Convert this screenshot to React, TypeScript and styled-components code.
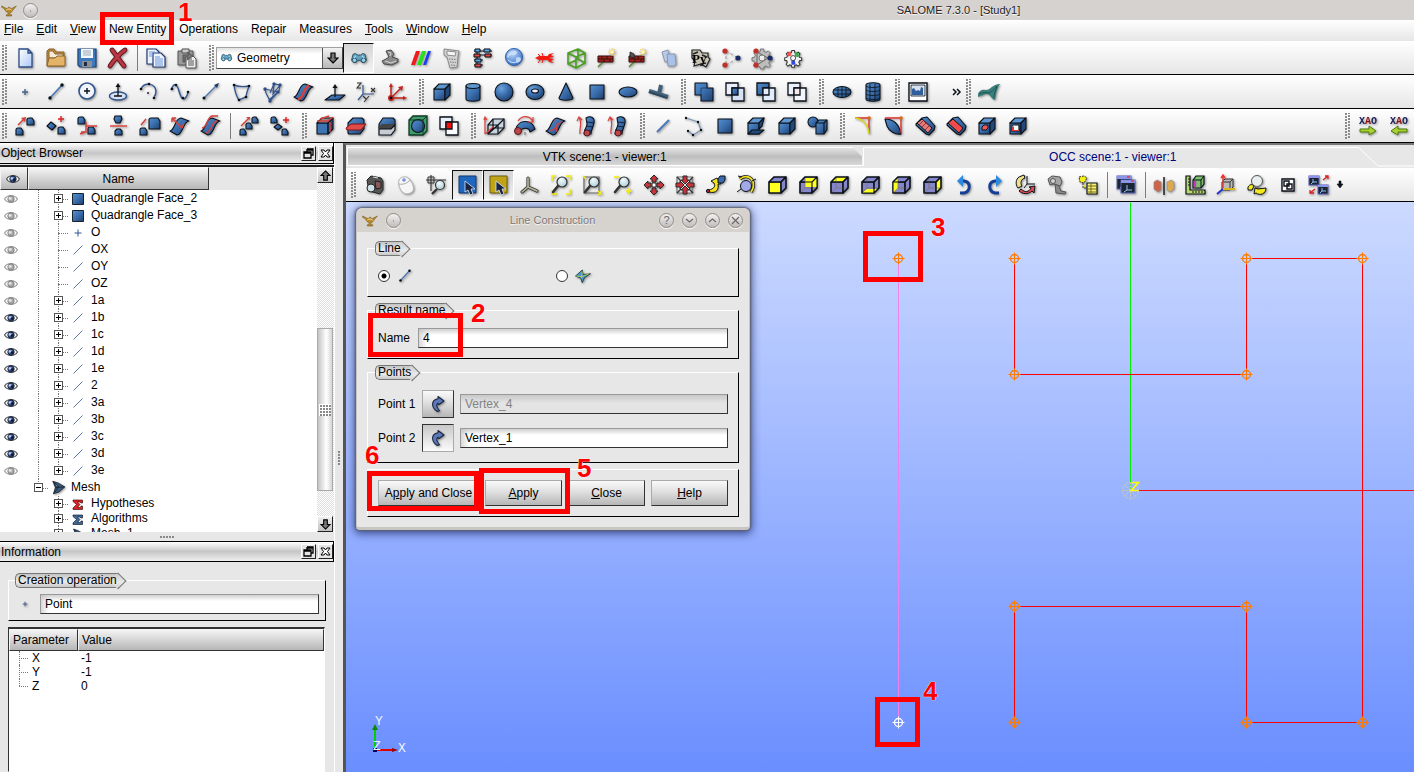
import React from 'react';
import styled, { createGlobalStyle, css } from 'styled-components';

const Global = createGlobalStyle`
  * { box-sizing: border-box; }
  body {
    margin: 0;
    background: #e7e7e7;
    color: #000;
    font: 12px/16px "Liberation Sans", Arial, sans-serif;
    overflow: hidden;
  }
  button, input, select { font: inherit; color: inherit; margin: 0; }
  ul { list-style: none; margin: 0; padding: 0; }
`;

/* ---------- icon drawing helpers ---------- */

const INK = '#0b1118';
const BLUE = 'url(#solid)';
const solid = { fill: BLUE, stroke: INK, strokeWidth: 1.1, strokeLinejoin: 'round' as const };
const wire = (stroke: string, strokeWidth = 1.2) => ({ fill: 'none', stroke, strokeWidth });

const Dots = ({ at, r = 1.3, c = INK }: { at: number[][]; r?: number; c?: string }) => (
  <>{at.map(([x, y]) => <circle key={`${x}-${y}`} cx={x} cy={y} r={r} fill={c} />)}</>
);

const Cube = ({ f = BLUE, t = '#5f97d0', s = '#23497a' }: { f?: string; t?: string; s?: string }) => (
  <g stroke={INK} strokeWidth="1.1" strokeLinejoin="round">
    <path d="M4 9h11v11H4z" fill={f} />
    <path d="M4 9l5-5h11l-5 5z" fill={t} />
    <path d="M15 9l5-5v11l-5 5z" fill={s} />
  </g>
);

const Plus = ({ x, y, c = '#d22' }: { x: number; y: number; c?: string }) => (
  <path d={`M${x - 3} ${y}h6M${x} ${y - 3}v6`} {...wire(c, 1.4)} />
);

const Knob = ({ x, y, s = 7 }: { x: number; y: number; s?: number }) => (
  <path d={`M${x} ${y + s}v-${s - 2}q0-2 2-2h${s - 4}l2 3v${s - 3}z`} {...solid} />
);

const Lens = ({ x = 14, y = 9 }: { x?: number; y?: number }) => (
  <g>
    <path d={`M${x - 4} ${y + 4}L${x - 9} ${y + 10}`} stroke="#333" strokeWidth="2.6" strokeLinecap="round" />
    <circle cx={x} cy={y} r="5" fill="url(#glass)" stroke="#333" strokeWidth="1.2" />
  </g>
);

const Squares = ({ a, b, c }: { a: string; b: string; c: string }) => (
  <g stroke={INK} strokeWidth="1.3">
    <path d="M3 3h12v12H3z" fill={a} />
    <path d="M9 8h12v13H9z" fill={b} />
    <path d="M9 8h6v7H9z" fill={c} />
  </g>
);

const Surface = ({ mid }: { mid?: React.ReactNode }) => (
  <g>
    <path d="M2 17c5-1 5-13 11-13l8 3c-6 0-6 14-12 14z" {...solid} />
    {mid}
  </g>
);

const Binoculars = () => (
  <g stroke="#1d3a4a" strokeWidth="1">
    <path d="M4 7l3-1 3 2h4l3-2 3 1 2 8-3 3h-3l-2-3h-4l-2 3H5l-3-3z" fill="#5fa3c2" />
    <circle cx="6" cy="15" r="3" fill="#8fd0ea" />
    <circle cx="18" cy="15" r="3" fill="#8fd0ea" />
    <path d="M8 9l-3 3M16 9l3 3" stroke="#bfe6f5" strokeWidth="1.4" />
  </g>
);

const ViewCube = ({ face }: { face: string }) => {
  const Y = '#ffff20';
  const L = '#8585cc';
  return (
    <g strokeLinejoin="round" stroke={INK} strokeWidth="1.1">
      <path d="M3 9h12v11H3z" fill={face === 'front' ? Y : L} />
      <path d="M3 9l5-5h12l-5 5z" fill={face === 'top' ? Y : L} />
      <path d="M15 9l5-5v11l-5 5z" fill={face === 'right' ? Y : L} />
      {face === 'back' && <path d="M8 5h12v9H8z" fill={Y} stroke="none" />}
      {face === 'bottom' && <path d="M3 20l5-4h10l-3 4z" fill={Y} stroke="none" />}
      {face === 'left' && <path d="M3 9l5-4v11l-5 4z" fill={Y} stroke="none" />}
      {face !== 'front' && <path d="M8 5v10h11M8 15l-5 5" fill="none" stroke="#77776a" strokeWidth=".8" />}
      <path d="M3 9h12v11H3zM3 9l5-5h12v11l-5 5M15 9l5-5" fill="none" />
    </g>
  );
};

const Window = ({ x, y }: { x: number; y: number }) => (
  <g>
    <rect x={x} y={y} width="14" height="13" fill="#1c2430" stroke="#5660b8" strokeWidth="1" />
    <rect x={x} y={y} width="14" height="3" fill="#8a94e8" />
    <path d={`M${x + 10} ${y + 1}h3`} stroke="#e33" strokeWidth="1.4" />
    <path d={`M${x + 6} ${y + 5}v5h5M${x + 6} ${y + 10}l-3 2`} {...wire('#8fc3ff', 1)} />
  </g>
);

const SmallWindow = ({ x, y }: { x: number; y: number }) => (
  <g>
    <rect x={x} y={y} width="10" height="9" fill="#1c2430" stroke="#5660b8" strokeWidth="1" />
    <rect x={x} y={y} width="10" height="2" fill="#8a94e8" />
    <path d={`M${x + 4} ${y + 3}v3h4M${x + 4} ${y + 6}l-2 2`} {...wire('#8fc3ff', 1)} />
  </g>
);

const Brick = ({ broken = false }: { broken?: boolean }) => (
  <g>
    <path d="M3 21l7-7" stroke="#5a8a3a" strokeWidth="1.6" />
    <path d="M3 10h15v6H3z" fill="#a3231c" stroke="#3a0f0c" strokeWidth="1" />
    <path d="M3 13h15M7 10v3M12 10v3M15 13v3M9 13v3" stroke="#3a0f0c" strokeWidth="1" />
    {broken && <path d="M4 6l4 2 1 4-5-1z" fill="#555" stroke="#222" strokeWidth=".8" />}
    <path d="M17 2v8M13 6h8M14 3l6 6M20 3l-6 6" stroke="#f7d774" strokeWidth="1" />
    <circle cx="17" cy="6" r="1.8" fill="#fff6c0" />
  </g>
);

const gear = 'M10.5 3h3l.5 2.6 2 .8 2.2-1.5 2.1 2.1-1.5 2.2.8 2 2.6.5v3l-2.6.5-.8 2 1.5 2.2-2.1 2.1-2.2-1.5-2 .8-.5 2.2h-3l-.5-2.2-2-.8-2.2 1.5-2.1-2.1 1.5-2.2-.8-2L2 14.7v-3l2.6-.5.8-2L3.9 7 6 4.9l2.2 1.5 2-.8z';

const Red = '#d8403c';

const icons: Record<string, React.ReactNode> = {
  new: <path d="M6 3h9l4 4v14H6zM15 3v4h4" fill="url(#paper)" stroke="#2f4f85" strokeWidth="1.3" />,
  open: (
    <g stroke="#8a6428" strokeWidth="1">
      <path d="M3 20V5l2-2h5l2 3h8v14z" fill="#c08a45" />
      <path d="M5 5h4l2 3h8v4H5z" fill="#f4ecd8" />
      <path d="M3 20l2-8h6l2-2h8v10z" fill="#e3b468" />
    </g>
  ),
  save: (
    <g>
      <path d="M3 3h18v18H5l-2-2z" fill="#3f79bd" stroke="#1e4274" strokeWidth="1.2" />
      <path d="M6 3h12v9H6z" fill="#f4f8fc" />
      <path d="M8 5h8M8 7h8M8 9h8" stroke="#9ab" strokeWidth="1" />
      <path d="M7 15h10v6H7z" fill="#8a9298" />
      <path d="M9 16h3v4H9z" fill="#1c2b44" />
    </g>
  ),
  delete: (
    <g strokeLinecap="round" fill="none">
      <path d="M6 4l12 16M19 4C12 9 8 14 4 20" stroke="#5c1218" strokeWidth="4.8" />
      <path d="M6 4l12 16M19 4C12 9 8 14 4 20" stroke="#b93644" strokeWidth="3" />
    </g>
  ),
  copy: (
    <g fill="#eef4ff" stroke="#1f3a70" strokeWidth="1.2">
      <path d="M3 3h9l3 3v12H3z" />
      <path d="M9 7h8l4 4v10H9z" />
      <path d="M5 6h6M5 8h4M5 10h4M11 11h5M11 13h8M11 15h8M11 17h8M11 19h8" stroke="#6f94d8" strokeWidth="1" />
    </g>
  ),
  paste: (
    <g stroke="#555" strokeWidth="1">
      <path d="M3 5h15v14H3z" fill="#9a9a9a" />
      <path d="M7 3h7v4H7z" fill="#ccc" />
      <path d="M11 10h7l3 3v9H11z" fill="#efefef" />
      <path d="M13 13h4M13 15h6M13 17h6M13 19h6" />
      <path d="M8 16V9h6l-2-3 6 4-6 4 1-3h-3v5z" fill="#777" />
    </g>
  ),
  binoculars: <Binoculars />,
  shaper: (
    <g fill="#8a8a8a" stroke="#4a4a4a" strokeWidth="1">
      <path d="M8 5l5-1 3 4-2 3 6 2v3l-6 3-8-1-2-3 4-2 3-2z" />
      <path d="M10 6l3 1-1 3M7 15l6 2 5-2" stroke="#d4d4d4" fill="none" />
    </g>
  ),
  stripes: (
    <g>
      <path d="M2 19L7 5h4L6 19z" fill="#f01c1c" />
      <path d="M8 19l5-14h4l-5 14z" fill="#27e01c" />
      <path d="M14 19l5-14h3l-5 14z" fill="#1c3cf0" />
    </g>
  ),
  calc: (
    <g stroke="#8a8a8a" strokeWidth="1">
      <path d="M4 3l15 2-1 5-1 11-7 1-3-11-3-2z" fill="#d2d2d2" />
      <path d="M7 5l9 1-1 4-8-1z" fill="#f8f8f8" />
      <path d="M9 13l7 .5M10 16l6 .5M11 19l5 .5" stroke="#777" strokeDasharray="1.500 1" />
    </g>
  ),
  yacs: (
    <g stroke={INK} strokeWidth="1">
      <path d="M3 5h18M3 9h18M3 14h9M3 19h9M6 5v14" />
      <path d="M4 3h5v3H4zM13 3h6v3h-6z" fill="#58a6e8" />
      <path d="M3 8h6v3H3zM14 8h6v3h-6z" fill="#e04848" />
      <path d="M4 13h6v3H4z" fill="#58a6e8" />
      <path d="M4 18h6v3H4z" fill="#e04848" />
    </g>
  ),
  globe: (
    <g>
      <circle cx="12" cy="11" r="8.5" fill="url(#globe)" stroke="#2a5fae" strokeWidth="1" />
      <path d="M6 8c3-4 8-4 9-2s-3 4-5 3-3 4-5 2M14 12c2-2 5-1 5 1s-3 5-5 3z" fill="#cfe2fb" opacity=".8" />
      <path d="M6 14c4 4 9 3 12-1" {...wire('#dbe9fc', 1)} />
    </g>
  ),
  lobster: (
    <g fill="#f31a12">
      <path d="M2 12l4-2h8l3 2-3 2H6z" />
      <path d="M14 11l2-3 5-1-3 2 3 2-6 1zM14 13l2 3 5 1-3-2 3-2-6-1z" />
      <path d="M7 14l-2 3M10 14l-1 3M7 10L5 8M10 10L9 7" stroke="#f31a12" strokeWidth="1" />
    </g>
  ),
  greencube: (
    <g {...wire('#4ba024', 1.6)} strokeLinejoin="round">
      <path d="M4 7l10-4 7 4v10l-9 5-8-4zM4 7l8 4 9-4M12 11v11M14 3v10M14 13l-10 5M14 13l7 4" />
    </g>
  ),
  brick1: <Brick />,
  brick2: <Brick broken />,
  pages: (
    <g fill="#bccbe4" stroke="#8a97b4" strokeWidth="1">
      <path d="M5 6l6-2 2 10-5 2z" />
      <path d="M10 8h8l1 10-2 2h-6z" fill="#a9c0e8" />
    </g>
  ),
  python: (
    <g>
      <path d="M4 4h8l2 3h6v4l2 2-4 8-5-3-7 2 1-5-3-3z" fill="#c9c4b4" stroke="#222" strokeWidth="1.2" />
      <path d="M5 8l5-2M14 9l5 2M13 18l5-1" stroke="#222" strokeWidth="1.6" />
      <text x="4" y="17" fontFamily="Liberation Serif" fontWeight="700" fontSize="13">Py</text>
    </g>
  ),
  graph: (
    <g>
      <path d="M7 5l12 7M7 5l0 14M7 19l12-7" {...wire('#9a9a9a', 1)} strokeDasharray="3 2" />
      <Dots at={[[6, 5], [6, 19]]} r={2.6} c="#c03028" />
      <Dots at={[[19, 12]]} r={2.6} c="#1c2a66" />
    </g>
  ),
  gearGraph: (
    <g>
      <path d={gear} fill="#bdbdbd" stroke="#777" strokeWidth="1" />
      <path d="M7 6l11 6-11 7z" {...wire('#666', 1)} />
      <circle cx="12" cy="12" r="3" fill="#eee" stroke="#777" />
      <Dots at={[[6, 5], [6, 19]]} r={2.6} c="#c03028" />
      <Dots at={[[20, 12]]} r={2.6} c="#1c2a66" />
    </g>
  ),
  gearRgb: (
    <g transform="translate(2 2) scale(.84)">
      <path d={gear} fill="#f2f2f2" stroke="#333" strokeWidth="1.2" />
      <path d="M5 6l4-2 1 5-4 1z" fill="#f05050" />
      <path d="M14 5l5 1-1 5-4-1z" fill="#38b048" />
      <path d="M10 14h4l1 6h-5z" fill="#3848e8" />
      <circle cx="12" cy="12" r="3" fill="#fff" stroke="#333" />
    </g>
  ),

  point: <Plus x={12} y={12} c="#4a628c" />,
  segment: (
    <g>
      <path d="M6 18L18 5" {...wire('#4f78b4', 1.8)} />
      <Dots at={[[6, 18], [18, 5]]} r={1.7} />
    </g>
  ),
  circle: (
    <g>
      <circle cx="12" cy="11" r="8" fill="#f1f4fa" stroke="#33568f" strokeWidth="1.6" />
      <Plus x={12} y={11} c={INK} />
    </g>
  ),
  ellipse: (
    <g>
      <ellipse cx="12" cy="16" rx="8.5" ry="4" fill="#d7e2f2" stroke="#33568f" strokeWidth="1.5" />
      <path d="M12 16V5M8 16h8" {...wire(INK, 1.3)} />
      <path d="M12 3l2.500 4h-5z" fill={INK} />
    </g>
  ),
  arc: (
    <g>
      <path d="M4 9c3-7 14-6 15 2 0 3-1 5-2 6" {...wire('#33568f', 1.5)} />
      <Dots at={[[4, 9], [12, 4], [17, 18]]} />
      <Dots at={[[11, 13]]} r={0.9} />
    </g>
  ),
  curve: (
    <g>
      <path d="M3 10C6 2 9 4 11 11s5 13 9 2" {...wire('#33568f', 1.5)} />
      <Dots at={[[4, 9], [8, 5], [15, 18], [20, 12]]} />
    </g>
  ),
  vector: (
    <g>
      <path d="M5 18L19 4" {...wire('#4f78b4', 1.5)} />
      <path d="M20 3l-5 2 3 3z" fill="#203a66" />
      <Dots at={[[5, 18]]} r={1.5} />
    </g>
  ),
  sketch: (
    <g>
      <path d="M4 5c5 2 10 2 15 1-2 6-3 9-3 11l-7 3C6 16 5 12 4 5z" {...wire('#33568f', 1.4)} />
      <Dots at={[[4, 5], [19, 6], [16, 17], [9, 20]]} />
    </g>
  ),
  sketch3d: (
    <g {...wire('#33568f', 1.2)}>
      <path d="M4 9l13 3-8 9-4-8zM8 20l10-9 1-6-6-1-4 9M13 4l-1 10 7-9" />
      <Dots at={[[4, 9], [17, 12], [9, 21], [13, 4], [19, 5]]} r={1.1} />
    </g>
  ),
  isoline: <Surface mid={<path d="M6 19c6 0 5-12 11-13" {...wire(Red, 2.4)} />} />,
  plane: (
    <g>
      <path d="M2 20l7-5h13l-6 5z" {...solid} />
      <path d="M12 17V6" {...wire(INK, 1.3)} />
      <path d="M12 4l2.500 4h-5z" fill={INK} />
    </g>
  ),
  lcs: (
    <g>
      <path d="M9 5v9h11M9 14l-5 6" {...wire('#33568f', 1.2)} />
      <path d="M3 3h4l-4 5h4M17 8l4 4M21 8l-4 4M9 16l3 3M15 16l-5 6" {...wire('#333', 1.1)} />
    </g>
  ),
  originAxes: (
    <g {...wire('#c8201c', 1.5)}>
      <path d="M6 18V5M6 18h13M6 18L16 8" />
      <path d="M6 3l2 4H4zM22 18l-4-2v4zM18 6l-5 1 4 4z" fill="#c8201c" stroke="none" />
      <Dots at={[[6, 18]]} r={2.2} />
    </g>
  ),

  box: <Cube />,
  cylinder: (
    <g {...solid}>
      <path d="M5 6v13c0 3 14 3 14 0V6z" />
      <ellipse cx="12" cy="6" rx="7" ry="2.5" fill="#5f97d0" />
    </g>
  ),
  sphere: <circle cx="12" cy="12" r="9" {...solid} fill="url(#ball)" />,
  torus: (
    <g {...solid}>
      <ellipse cx="12" cy="12" rx="9" ry="7.5" fill="url(#ball)" />
      <ellipse cx="12" cy="11" rx="3.500" ry="2" fill="#eef" />
    </g>
  ),
  cone: <path d="M12 3l7 15c0 3-14 3-14 0z" {...solid} />,
  face: <path d="M5 5h14v14H5z" {...solid} />,
  disk: <ellipse cx="12" cy="12" rx="9" ry="5" {...solid} />,
  pipeT: (
    <g {...wire('#3f6078', 4)}>
      <path d="M2 11l19 6M12 14l2-9" />
      <path d="M2 12l18 6" stroke="#2a4358" strokeWidth="1.5" />
    </g>
  ),
  fuse: (
    <g>
      <path d="M3 3h12v5h6v13H9v-6H3z" {...solid} />
      <path d="M9 15V8h6" {...wire('#203a60', 0.8)} />
    </g>
  ),
  common: <Squares a="#e9f0fb" b="#d5e2f5" c={BLUE} />,
  cut: <Squares a={BLUE} b="#e3ecfa" c="#e3ecfa" />,
  section: <Squares a="#eaf1fd" b="#f2f5fb" c="#f5e8ea" />,
  meshDisk: (
    <g>
      <ellipse cx="12" cy="12" rx="9" ry="5.5" {...solid} />
      <path d="M3 10h18M3 14h18M8 7v10M12 6.500v11M16 7v10" {...wire(INK, 0.8)} />
    </g>
  ),
  meshCyl: (
    <g>
      <path d="M5 5v14c0 3 14 3 14 0V5c0-3-14-3-14 0z" {...solid} />
      <path d="M5 6c2 2 12 2 14 0M5 10c2 2 12 2 14 0M5 14c2 2 12 2 14 0M5 18c2 2 12 2 14 0M9 4v17M14 4v17" {...wire(INK, 0.8)} />
    </g>
  ),
  image: (
    <g>
      <path d="M3 3h18v18H3z" fill="#fff" stroke={INK} strokeWidth="1.4" />
      <path d="M5 5h14v11H5z" fill="#d6e2f2" stroke={INK} strokeWidth=".8" />
      <path d="M6 15V9l2-1 2 3 2-1 2 1 1-4 2 1v7z" fill="#2f5f9c" />
    </g>
  ),
  more: <path d="M19 9l3 3-3 3M23 9l3 3-3 3" {...wire(INK, 1.5)} />,
  teal: (
    <g>
      <path d="M1 14c1-3 4-5 7-4 5 1 7-6 15-6-3 4-4 10-5 16-3 0-4-5-8-6-3 0-5 2-9 3z" fill="#3b7f7b" />
      <path d="M2 14c4-2 6-1 9-1s6-4 9-7M17 18c0-4 1-7 3-11" {...wire('#1f5552', 1)} />
    </g>
  ),

  translate: (
    <g>
      <Knob x={3} y={14} />
      <Knob x={14} y={4} />
      <path d="M5 11l6-6" {...wire(Red, 1.4)} />
      <path d="M13 3L8 4l4 4z" fill={Red} />
    </g>
  ),
  rotate: (
    <g>
      <path d="M3 12l4-4 5 4-4 4z" {...solid} />
      <Knob x={14} y={13} />
      <Plus x={17} y={5} />
    </g>
  ),
  location: (
    <g>
      <Knob x={3} y={3} />
      <Knob x={13} y={13} />
      <path d="M11 8v10H6M11 12h11M5 20l5-2" {...wire(Red, 1.4)} />
    </g>
  ),
  mirror: (
    <g>
      <path d="M9 2h6l1 3-2 4h-4L8 5z" {...solid} />
      <path d="M9 21v-4l2-2h3l2 2v4z" {...solid} />
      <path d="M4 12h17" {...wire(Red, 1.4)} />
    </g>
  ),
  scale: (
    <g>
      <Knob x={3} y={14} />
      <Knob x={12} y={4} s={11} />
      <path d="M4 11l5-6" {...wire(Red, 1.4)} />
    </g>
  ),
  offset: <Surface mid={<path d="M4 4l10 10M4 4h4M4 4v4M14 14l2-5" {...wire(Red, 1.5)} />} />,
  projection: <Surface mid={<path d="M3 14c5 0 5-11 10-12h6M7 19c6-1 5-11 11-12" {...wire(Red, 1.4)} />} />,
  multiTranslate: (
    <g>
      <Knob x={3} y={15} s={6} />
      <Knob x={9} y={9} s={6} />
      <Knob x={15} y={3} s={6} />
      <path d="M4 12l8-8" {...wire(Red, 1.4)} />
      <path d="M13 3H9l4 3z" fill={Red} />
    </g>
  ),
  multiRotate: (
    <g>
      <Knob x={3} y={3} s={6} />
      <path d="M6 13l4-3 4 3-4 3z" {...solid} />
      <Knob x={14} y={15} s={6} />
      <Plus x={18} y={6} />
    </g>
  ),
  partition: (
    <g>
      <Cube f="#3f74b2" t="#8a8f96" />
      <path d="M4 7h11l5-4M17 8v10M7 5l9-3" {...wire(Red, 1.4)} />
    </g>
  ),
  archimede: (
    <g>
      <path d="M4 19V9l5-5h9l2 2v9l-4 5H5z" {...solid} />
      <path d="M2 14l5-4h15l-5 6H3z" fill="#e04a48" stroke="#7c1414" strokeWidth="1" />
    </g>
  ),
  groupOn: (
    <g>
      <path d="M4 10l4-6h10l2 2v4l-4 4H4z" {...solid} />
      <path d="M3 13l4-3h14l-4 5H4z" fill="#444" />
      <path d="M4 15h12l4-4v5l-4 5H4z" fill="#c7cbd2" stroke={INK} strokeWidth="1.2" />
    </g>
  ),
  blockExplode: (
    <g>
      <path d="M3 6l4-4h14v15l-4 4H3z" fill="#3f9c6a" stroke="#123a24" strokeWidth="1.3" />
      <circle cx="12" cy="12" r="6.5" {...solid} />
      <path d="M3 6h14v15M17 6l4-4" {...wire('#123a24', 1)} />
    </g>
  ),
  sharedShape: <Squares a="#e9f0fb" b="#fafbfe" c="#f80c0c" />,
  extrusion: (
    <g {...wire(INK, 1.2)}>
      <path d="M6 11l5-6h11v9l-6 6H6z" fill="#c9d3dd" />
      <path d="M6 11h10v9M16 11l6-6M6 20L16 11M11 5v9l-5 6M11 14h11" />
      <path d="M3 20V4M2 6l1-3 2 3M3 20l8-7" stroke={Red} />
    </g>
  ),
  revolution: (
    <g>
      <path d="M3 15c2-10 16-10 19 0l-5 3c-1-5-8-5-10 0z" {...solid} />
      <path d="M5 7c4-6 12-6 15 1M20 3v5h-5" {...wire(Red, 1.2)} />
      <circle cx="5" cy="17" r="3.5" fill="#b8484c" stroke="#5c1518" />
      <path d="M12 18v3" {...wire('#777')} />
    </g>
  ),
  filling: <Surface mid={<path d="M5 17c8-1 8-8 13-10M11 5l2 13" {...wire(Red, 1.2)} />} />,
  pipe: (
    <g>
      <path d="M11 4c5-3 9 0 8 5s-3 7-3 11h-7c0-4 3-7 3-10z" {...solid} />
      <path d="M12 8l7 1M11 12l7 1M9 16l7 1" {...wire(INK, 0.8)} />
      <path d="M4 4c4 5 0 10 1 16M2 7l2-4 3 3" {...wire(Red, 1.2)} />
      <circle cx="12" cy="19" r="3" fill="#b8484c" stroke="#5c1518" />
    </g>
  ),
  edgeLine: <path d="M6 18L18 6" {...wire('#4a78b8', 2)} />,
  wire: (
    <g>
      <path d="M4 4l12 4 3 8-8 5-5-4" {...wire('#7f96b8', 1.3)} />
      <Dots at={[[4, 4], [16, 8], [19, 16], [11, 21], [6, 17]]} r={1.2} />
    </g>
  ),
  shell: (
    <g {...solid}>
      <path d="M4 9h11v11H4z" />
      <path d="M4 9l5-5h11l-5 5z" fill="#5f97d0" />
      <path d="M15 9l5-5-2 8-3 3z" fill="#23497a" />
      <path d="M4 20l4-4h12l-5 4z" fill="#23497a" />
    </g>
  ),
  compound: (
    <g {...solid}>
      <circle cx="7" cy="8" r="5" />
      <path d="M10 9l3-3h8v10l-3 4h-8z" />
      <path d="M10 9h8v11M18 9l3-3" fill="none" />
    </g>
  ),
  fillet1d: (
    <g>
      <path d="M4 4h14v16" {...wire('#e03030', 1.4)} />
      <path d="M4 4c9 1 13 6 14 16" {...wire('#d8d820', 1.6)} />
      <Dots at={[[18, 4]]} r={1.8} c="#d86a10" />
    </g>
  ),
  fillet2d: (
    <g>
      <path d="M3 5c9 0 14 5 16 15-6 1-12-3-14-8z" {...solid} />
      <path d="M3 4h16v15" {...wire('#e03030', 1.4)} />
      <Dots at={[[19, 4]]} r={1.8} c="#d86a10" />
    </g>
  ),
  fillet3d: (
    <g>
      <path d="M3 10l6-6 5-1 8 9-1 4-5 5-3-1-10-9z" {...solid} />
      <path d="M4 9l5-4 10 9-4 5z" fill="#e4797c" stroke={INK} strokeWidth="1" />
      <path d="M6 11l5-5M9 13l5-5M12 16l5-5" {...wire('#8a1f22', 0.8)} />
    </g>
  ),
  chamfer: (
    <g>
      <path d="M3 10l6-6 5-1 8 9-1 4-5 5-3-1-10-9z" {...solid} />
      <path d="M4 9l5-4 10 9-4 5z" fill="#f04a4a" stroke={INK} strokeWidth="1" />
    </g>
  ),
  featureCube: (
    <g>
      <Cube />
      <path d="M7 13l2-2h4v3l-2 2H7z" fill="#f05a5a" stroke={INK} strokeWidth="1" />
    </g>
  ),
  featureHole: (
    <g>
      <Cube />
      <path d="M6 11h7v6H6z" fill="#fff" stroke={INK} strokeWidth="1.2" />
      <path d="M6 17v-3l2-2v4h5v1z" fill="#e33" />
    </g>
  ),
  xaoOut: (
    <g>
      <text x="3" y="10" fontSize="10" fontWeight="700" fontFamily="Liberation Mono" fill="#1c2460">X<tspan fill="#8a1010">A</tspan>O</text>
      <path d="M4 15h9v-3l7 5-7 4v-3H4z" fill="#a9d22c" stroke="#4f7a10" strokeWidth="1" />
    </g>
  ),
  xaoIn: (
    <g>
      <text x="3" y="10" fontSize="10" fontWeight="700" fontFamily="Liberation Mono" fill="#1c2460">X<tspan fill="#8a1010">A</tspan>O</text>
      <path d="M20 15h-9v-3l-7 5 7 4v-3h9z" fill="#a9d22c" stroke="#4f7a10" strokeWidth="1" />
    </g>
  ),

  camera: (
    <g stroke="#222" strokeWidth="1">
      <path d="M4 7l4-4 10 2 2 3v9l-3 4-11-3z" fill="#555" />
      <path d="M12 8l6 1v6l-5 1z" fill="#8a5a5a" />
      <circle cx="8" cy="15" r="4" fill="#cfe3e6" />
      <path d="M10 4l5 1" stroke="#ddd" />
    </g>
  ),
  mouse: (
    <g>
      <path d="M5 7c2-4 8-4 10-1 4 4 6 11 3 13-4 3-9 2-11-2-2-3-3-7-2-10z" fill="#f6f6f6" stroke="#b5b5b5" strokeWidth="1" />
      <path d="M5 11c4 1 9-1 11-4" {...wire('#aaa', 1)} />
      <circle cx="10" cy="7" r="1.8" fill="#7a90e0" />
    </g>
  ),
  trihedronZoom: (
    <g>
      <path d="M6 2v16M1 7h20" {...wire('#333', 1.1)} />
      <path d="M3 4h6v6H3z" {...wire('#333', 1)} />
      <path d="M12 16l-5 5" stroke="#333" strokeWidth="2.4" />
      <circle cx="15" cy="12" r="4.5" fill="url(#glass)" stroke="#333" strokeWidth="1.2" />
    </g>
  ),
  select: (
    <g>
      <path d="M3 3h17v17H3z" fill="#1f66bf" stroke="#12396e" />
      <path d="M9 8v11l3-2 2 5 3-1-2-5h4z" fill="#1b2440" stroke="#dfe8f5" strokeWidth=".8" />
    </g>
  ),
  preselect: (
    <g>
      <path d="M3 3h17v17H3z" fill="#c0a418" stroke="#6e5f12" />
      <path d="M9 8v11l3-2 2 5 3-1-2-5h4z" fill="#1b2440" stroke="#dfe8f5" strokeWidth=".8" />
    </g>
  ),
  triad: (
    <g strokeLinecap="round">
      <path d="M10 14V5M10 14l-6 5M10 14l9 4" stroke="#3a3a34" strokeWidth="3.2" />
      <path d="M10 14V5M10 14l-6 5M10 14l9 4" stroke="#b9b7a0" strokeWidth="1.6" />
    </g>
  ),
  fitAll: (
    <g>
      <path d="M3 8V3h4M17 3h4v4M21 16v5h-4M8 21H3v-4" {...wire('#f5ee14', 1.6)} />
      <Lens x={13} y={9} />
    </g>
  ),
  fitArea: (
    <g>
      <path d="M4 4h15v16H4z" {...wire('#666', 1.2)} />
      <path d="M3 3l3 3M18 18l4 4M22 18l-4 4" {...wire('#f5ee14', 1.5)} />
      <Lens x={14} y={9} />
    </g>
  ),
  zoom: (
    <g>
      <path d="M3 4h5M15 18h6M18 15v6" {...wire('#f5ee14', 1.6)} />
      <Lens x={13} y={9} />
    </g>
  ),
  pan: (
    <g fill="#c8343a" stroke="#2a2a2a" strokeWidth="1">
      <path d="M12 2l4 4h-2v3h-4V6H8zM12 22l-4-4h2v-3h4v3h2zM2 12l4-4v2h3v4H6v2zM22 12l-4 4v-2h-3v-4h3V8z" />
      <path d="M10 10h4v4h-4z" fill="#fff" />
    </g>
  ),
  globalPan: (
    <g>
      <path d="M4 4h15v16H4z" fill="#e2e2e2" stroke="#777" strokeWidth="1.2" />
      <path d="M4 4l4 4M20 4l-4 4M4 20l4-4M20 20l-4-4" {...wire('#333', 1.4)} />
      <g fill="#c8343a" stroke="#2a2a2a" strokeWidth="1">
        <path d="M10 3h4v4h2l-4 4-4-4h2zM10 21h4v-4h2l-4-4-4 4h2zM3 10v4h4v2l4-4-4-4v2zM21 10v4h-4v2l-4-4 4-4v2z" />
      </g>
    </g>
  ),
  rotationPoint: (
    <g stroke={INK} strokeWidth="1">
      <path d="M5 19c8 2 10-3 9-8l3 0-4-6-6 3 3 2c2 4-1 6-5 7z" fill="#f5e31c" />
      <path d="M14 6l2-3h5v4l-2 3h-5z" fill="#3a6ab0" />
      <circle cx="4" cy="18" r="1.6" fill="#c22" />
    </g>
  ),
  rotateView: (
    <g>
      <path d="M5 6c4-4 11-3 13 3 1 3 0 7-2 10" {...wire(INK, 3.2)} />
      <path d="M5 6c4-4 11-3 13 3 1 3 0 7-2 10" {...wire('#f0e020', 1.8)} />
      <circle cx="11" cy="13" r="5.5" fill="#a3a9e6" stroke={INK} />
      <path d="M2 19l4-3M17 8l4-2M3 3l4 1" {...wire(INK, 1)} />
    </g>
  ),
  front: <ViewCube face="front" />,
  back: <ViewCube face="back" />,
  top: <ViewCube face="top" />,
  bottom: <ViewCube face="bottom" />,
  left: <ViewCube face="left" />,
  right: <ViewCube face="right" />,
  anticlock: (
    <g>
      <path d="M9 8h3c7 1 7 10 0 12H8" {...wire('#153f94', 3)} />
      <path d="M5 8l6-6v12z" fill="#2b8be0" />
    </g>
  ),
  clock: (
    <g>
      <path d="M15 8h-3c-7 1-7 10 0 12h4" {...wire('#153f94', 3)} />
      <path d="M19 8l-6-6v12z" fill="#2b8be0" />
    </g>
  ),
  resetView: (
    <g stroke={INK} strokeWidth="1">
      <path d="M5 4l5-2 1 3c-4 1-5 5-3 8l-4 2C1 11 2 6 5 4z" fill="#f1e08a" />
      <path d="M7 16c4 4 8 3 10-1l-2-1 6-1-1 7-2-2c-4 4-10 3-13 0z" fill="#e0484c" />
      <path d="M13 3v8h8M13 11l-3 4" fill="none" />
    </g>
  ),
  storeView: (
    <g stroke="#555" strokeWidth="1">
      <path d="M3 6l4-3 8 1 2 5-2 4-6-2-4 1z" fill="#a4a4a4" />
      <path d="M10 11l4 2 2 5 5 1-1 2-9-1z" fill="#888" />
      <circle cx="8" cy="8" r="2.5" fill="#d4d4d4" />
    </g>
  ),
  restoreView: (
    <g>
      <path d="M11 10h10v11H11z" fill="#f8f27a" stroke={INK} strokeWidth="1.2" />
      <path d="M11 13h10M11 16h10M11 19h10M15 10v11" {...wire('#6e6a1a', 1)} />
      <path d="M3 4l5-1 3 2-3 5-4-1zM7 10v5h3" fill="#f5ee14" stroke="#333" strokeWidth="1" strokeDasharray="2 1" />
    </g>
  ),
  cloneWindow: (
    <g>
      <Window x={3} y={3} />
      <Window x={7} y={7} />
    </g>
  ),
  clipping: (
    <g>
      <path d="M12 4v18" {...wire(INK, 1.4)} />
      <path d="M9 9v8l-3 2-4-3V9l3-2z" fill="#d0644a" stroke="#888" strokeWidth=".6" />
      <path d="M15 9v8l3 2 4-3V9l-3-2z" fill="#dca850" stroke="#888" strokeWidth=".6" />
    </g>
  ),
  graduated: (
    <g>
      <path d="M3 3h4v14h15v4H3z" fill="#b9d86a" stroke={INK} strokeWidth="1.2" />
      <path d="M5 6h2M5 9h2M5 12h2M10 18v2M13 18v2M16 18v2M19 18v2" {...wire(INK, 1)} />
      <path d="M10 7l3-4h8v8l-3 4h-8z" fill="#7fc06a" stroke={INK} strokeWidth="1.2" />
      <path d="M10 7h8v8M18 7l3-4" {...wire(INK, 1)} />
      <path d="M12 8v6" stroke="#c03ac0" strokeWidth="2.4" />
    </g>
  ),
  ambient: (
    <g>
      <path d="M8 9l3-3h8v8l-3 3H8z" fill="#bbb" stroke="#333" strokeWidth="1" />
      <path d="M8 9h8v8M16 9l3-3" {...wire('#333', 1)} />
      <path d="M9 17V3M7 5l2-3 2 3" {...wire('#e33', 1.4)} />
      <path d="M9 16l-6 5" {...wire('#2436c8', 2)} />
      <path d="M9 16h12" {...wire('#d8b81c', 2)} />
    </g>
  ),
  light: (
    <g>
      <circle cx="12" cy="8" r="5.5" fill="#e8eef0" stroke="#555" strokeWidth="1" />
      <path d="M10 13h4v4h-4z" fill="#777" />
      <path d="M3 14c2-3 4-3 6-1l-2 4-4 0zM13 16l8-1c0 6-6 8-10 5l-2 1 1-6z" fill="#f5e81c" stroke={INK} strokeWidth="1" />
    </g>
  ),
  minimize: (
    <g>
      <path d="M6 6h12v12H6z" fill="#fff" stroke={INK} strokeWidth="1.4" />
      <path d="M8 8h5v5H8zM11 11h5v5h-5z" fill="#fff" stroke={INK} strokeWidth="1.4" />
    </g>
  ),
  syncViews: (
    <g>
      <SmallWindow x={2} y={3} />
      <SmallWindow x={11} y={12} />
      <path d="M3 20l5-4M3 17v3h4M21 3l-5 4M18 3h3v3" {...wire('#e02020', 1.3)} />
    </g>
  ),
  down: <path d="M11 8h2v3h2l-3 4-3-4h2z" fill={INK} stroke={INK} strokeWidth=".6" />,

  eye: (
    <g>
      <path d="M1 12c5-8 17-8 22 0-5 8-17 8-22 0z" fill="#fff" stroke="#4c4c4c" strokeWidth="2" />
      <circle cx="12" cy="12" r="5.5" fill="#2f4f96" stroke="#10192c" strokeWidth="1.5" />
      <path d="M8 9h5v4H8z" fill="#c4d2ee" />
      <circle cx="14" cy="13" r="2.5" fill="#10192c" />
    </g>
  ),
  eyeOff: (
    <g>
      <path d="M1 12c5-8 17-8 22 0-5 8-17 8-22 0z" fill="#fff" stroke="#999" strokeWidth="2" />
      <circle cx="12" cy="12" r="5.5" fill="#a8a8a8" stroke="#7c7c7c" strokeWidth="1.5" />
      <path d="M8 9h5v4H8z" fill="#e8e8e8" />
    </g>
  ),
  treeFace: <path d="M1 1h22v22H1z" fill={BLUE} stroke={INK} strokeWidth="1.8" />,
  treePoint: <path d="M5 12h14M12 5v14" {...wire('#33568f', 2)} />,
  treeLine: <path d="M3 21L21 3" {...wire('#4a6a94', 1.8)} />,
  mesh: (
    <g stroke="#141c28" strokeWidth="1.2">
      <path d="M3 2l9 3 10 6-9 8-9 3 3-10z" fill="#3c5878" />
      <path d="M7 12l15-1M3 2l9 9-8 11" fill="none" />
      <path d="M6 5l5 5-3 1z" fill="#9cc4ec" />
    </g>
  ),
  sigmaRed: <path d="M2 4h19v6h-3l-2-2h-5l5 5-5 6h6l1-3h3v7H2v-3l7-7-7-6z" fill="#e02424" stroke="#3a0808" strokeWidth="1.3" />,
  sigmaBlue: <path d="M2 4h19v6h-3l-2-2h-5l5 5-5 6h6l1-3h3v7H2v-3l7-7-7-6z" fill="#3f6a98" stroke="#0c1626" strokeWidth="1.3" />,
  bent: <path d="M12 2l8 6-7 5-1-2c-3 2-2 5 2 10l-3 1C3 17 2 7 12 5z" fill="#5b78b8" stroke="#18233c" strokeWidth="1.4" strokeLinejoin="round" />,
  planes: (
    <g stroke="#0e2a3a" strokeWidth="1">
      <path d="M2 12l9-8 1 6 10-1-8 5-3 7-2-6z" fill="#4596c4" />
      <path d="M3 12l7 1 10-4M11 6l-1 9" stroke="#d8d840" fill="none" />
    </g>
  ),
  lamp: (
    <g fill="#b8892a" stroke="#6e5216" strokeWidth=".8">
      <path d="M1 6l8 4 2-2h2l2 2 8-4-5 6c-2 4-4 4-5 5v2h3v2H8v-2h3v-2c-2-1-3-2-5-5-1-2-3-3-5-4z" />
      <path d="M8 12c3-2 5-2 8 0" stroke="#f8e4a0" strokeWidth="1.4" fill="none" />
    </g>
  ),
};

const Svg = styled.svg<{ $shadow?: boolean }>`
  display: block;
  flex: none;
  overflow: visible;
  ${(p) => p.$shadow && css`filter: drop-shadow(1px 1px 1px rgba(0, 0, 0, 0.4));`}
`;

const Icon = ({ name, size = 24, shadow = false }: { name: string; size?: number; shadow?: boolean }) => (
  <Svg width={size} height={size} viewBox="0 0 24 24" $shadow={shadow} aria-hidden="true">{icons[name]}</Svg>
);

const Defs = styled.svg`
  position: absolute;
  width: 0;
  height: 0;
`;

const Gradients = () => (
  <Defs aria-hidden="true">
    <defs>
      <linearGradient id="solid" x1="0" y1="0" x2="1" y2="1">
        <stop offset="0" stopColor="#5590cf" />
        <stop offset=".5" stopColor="#3a6dab" />
        <stop offset="1" stopColor="#1e3f6e" />
      </linearGradient>
      <linearGradient id="paper" x1="0" y1="0" x2="1" y2="1">
        <stop offset="0" stopColor="#fff" />
        <stop offset="1" stopColor="#a9c6f7" />
      </linearGradient>
      <radialGradient id="ball" cx=".35" cy=".3" r=".8">
        <stop offset="0" stopColor="#6ba3dc" />
        <stop offset=".5" stopColor="#3a6dab" />
        <stop offset="1" stopColor="#1c3a66" />
      </radialGradient>
      <radialGradient id="globe" cx=".4" cy=".3" r=".8">
        <stop offset="0" stopColor="#b8d4f8" />
        <stop offset="1" stopColor="#2c68c4" />
      </radialGradient>
      <radialGradient id="glass" cx=".4" cy=".3" r=".8">
        <stop offset="0" stopColor="#f2fbfd" />
        <stop offset="1" stopColor="#a6c8d2" />
      </radialGradient>
    </defs>
  </Defs>
);

/* ---------- frame ---------- */

const Shell = styled.div`
  display: flex;
  flex-direction: column;
  height: 100vh;
`;

const TitleBar = styled.header`
  display: flex;
  align-items: center;
  gap: 6px;
  flex: none;
  height: 20px;
  padding: 0 1px;
  background: #d6d2d0;
`;

const TitleText = styled.h1`
  flex: 1;
  margin: 0;
  padding-left: 460px;
  text-align: center;
  font-size: 11px;
  line-height: 16px;
  font-weight: 400;
  color: #222;
  text-shadow: 0 1px 1px #fff;
`;

const RoundButton = styled.button`
  display: flex;
  align-items: center;
  justify-content: center;
  width: 15px;
  height: 15px;
  padding: 0;
  border: 1px solid #8e8b89;
  border-radius: 50%;
  background: linear-gradient(#f2f1f0, #bfbcba);
  color: #666;
  font-size: 11px;
  line-height: 12px;
  box-shadow: 0 1px 1px #fff;
`;

const MenuBar = styled.nav`
  display: flex;
  align-items: center;
  gap: 13px;
  flex: none;
  height: 21px;
  padding: 0 4px 3px;
  background: linear-gradient(#fff, #e6e6e6);
`;

const MenuItem = styled.button`
  position: relative;
  padding: 0;
  border: 0;
  background: none;
  line-height: 16px;
  white-space: nowrap;
`;

const CalloutBox = styled.span`
  position: absolute;
  z-index: 5;
  border: 5px solid #f00;
  pointer-events: none;
`;

const CalloutNumber = styled.span`
  position: absolute;
  z-index: 6;
  color: #f00;
  font-size: 26px;
  line-height: 26px;
  font-weight: 700;
  text-shadow: 0 0 1px #fff, 0 0 1px #fff;
  pointer-events: none;
`;

type Rect = { x: number; y: number; w: number; h: number };

const Callout = ({ n, box, at }: { n: number; box: Rect; at: [number, number] }) => (
  <>
    <CalloutBox style={{ left: box.x, top: box.y, width: box.w, height: box.h }} />
    <CalloutNumber style={{ left: at[0], top: at[1] }}>{n}</CalloutNumber>
  </>
);

const Bar = styled.div`
  display: flex;
  align-items: center;
  height: 34px;
  flex: none;
  border-bottom: 1px solid #000;
  background: linear-gradient(#fff, #e6e6e6);
  overflow: hidden;
`;

const gripSizes = { lead: [9, 2], mid: [14, 7], view: [13, 5] };

const Grip = styled.span<{ $kind?: keyof typeof gripSizes; $end?: boolean }>`
  flex: none;
  width: ${(p) => gripSizes[p.$kind ?? 'mid'][0]}px;
  height: 26px;
  margin-left: ${(p) => (p.$end ? 'auto' : 0)};
  padding-left: ${(p) => gripSizes[p.$kind ?? 'mid'][1]}px;
  &::before {
    content: '';
    display: block;
    width: 5px;
    height: 26px;
    background:
      linear-gradient(#8c8c8c 2px, transparent 2px) 0 0 / 2px 3px repeat-y,
      linear-gradient(#8c8c8c 2px, transparent 2px) 3px 2px / 2px 3px repeat-y;
  }
`;

const Rule = styled.span`
  flex: none;
  width: 1px;
  height: 26px;
  margin: 0 2px 0 4px;
  background: #7c7c7c;
`;

const ToolButton = styled.button<{ $pressed?: boolean; $w?: number }>`
  display: flex;
  align-items: center;
  justify-content: center;
  flex: none;
  width: ${(p) => p.$w ?? 31}px;
  height: 30px;
  padding: 0;
  border: 1px solid transparent;
  background: none;
  ${(p) => p.$pressed && css`
    border-color: #111 #fff #fff #111;
    background: linear-gradient(#d4d4d4, #f3f3f3);
  `}
`;

const narrow: Record<string, number> = { down: 12, more: 26 };

const Tools = ({ names, pressed = [] }: { names: string; pressed?: string[] }) => (
  <>
    {names.split(' ').map((n, i) => {
      if (n === '|') return <Rule key={i} />;
      if (n === '::') return <Grip key={i} />;
      return (
        <ToolButton key={i} aria-label={n} $pressed={pressed.includes(n)} $w={narrow[n]}>
          <Icon name={n} shadow={!narrow[n]} />
        </ToolButton>
      );
    })}
  </>
);

const Combo = styled.label`
  display: flex;
  align-items: center;
  flex: none;
  width: 127px;
  height: 22px;
  padding-left: 3px;
  border: 1px solid;
  border-color: #a0a0a0 #444 #444 #a0a0a0;
  background: linear-gradient(#e2e2e2, #fff 6px);
`;

const ComboSelect = styled.select`
  appearance: none;
  flex: 1;
  min-width: 0;
  padding: 0 0 0 4px;
  border: 0;
  background: none;
  line-height: 16px;
`;

const ComboArrow = styled.span`
  display: flex;
  align-items: center;
  justify-content: center;
  width: 20px;
  height: 20px;
  border-left: 1px solid #555;
  background: linear-gradient(#f2f2f2, #b8b8b8);
`;

const Arrow = ({ up = false, size = 12 }: { up?: boolean; size?: number }) => (
  <svg width={size} height={size} viewBox="0 0 12 12" aria-hidden="true">
    <path
      d={up ? 'M6 1l5 5H8v5H4V6H1z' : 'M6 11l5-5H8V1H4v5H1z'}
      fill="#777" stroke="#000" strokeWidth="1.2"
    />
  </svg>
);

const Workspace = styled.main`
  display: flex;
  flex: 1;
  min-height: 0;
`;

const Docks = styled.section`
  display: grid;
  grid-template-rows: minmax(0, 389fr) 9px minmax(0, 231fr);
  flex: none;
  width: 334px;
`;

const Dock = styled.section`
  display: flex;
  flex-direction: column;
  min-height: 0;
  min-width: 0;
`;

const DockTitle = styled.header<{ $line?: boolean }>`
  display: flex;
  align-items: center;
  gap: 2px;
  flex: none;
  height: 21px;
  padding: 0 0 0 1px;
  border: 1px solid #000;
  border-width: ${(p) => (p.$line ? 1 : 0)}px 1px 1px 0;
  background: linear-gradient(#fff, #c6c6c6 50%, #f0f0f0);
`;

const DockName = styled.h2`
  flex: 1;
  margin: 0;
  font-size: 12px;
  line-height: 16px;
  font-weight: 400;
`;

const DockButton = styled.button`
  display: flex;
  align-items: center;
  justify-content: center;
  width: 15px;
  height: 15px;
  padding: 0;
  border: 1px solid;
  border-color: #fff #222 #222 #fff;
  background: #e4e4e4;
`;

const DockHeader = ({ title, line }: { title: string; line?: boolean }) => (
  <DockTitle $line={line}>
    <DockName>{title}</DockName>
    <DockButton aria-label="Float">
      <svg width="11" height="11" viewBox="0 0 11 11">
        <path d="M4 1h6v6H8M4 1v3M4 2h6" {...wire('#000', 1.3)} />
        <path d="M1 4h7v6H1zM1 5h7" {...wire('#000', 1.3)} />
      </svg>
    </DockButton>
    <DockButton aria-label="Close">
      <svg width="11" height="11" viewBox="0 0 11 11">
        <path d="M1 2h3l1.500 2L7 2h3L7.500 5.500 10 9H7L5.500 7 4 9H1l2.500-3.500z" fill="#fff" stroke="#000" strokeWidth="1" />
      </svg>
    </DockButton>
  </DockTitle>
);

const TreeFrame = styled.div`
  display: flex;
  flex: 1;
  min-height: 0;
  margin-top: 1px;
  border-top: 2px solid #222;
  background: #fff;
`;

const TreeMain = styled.div`
  flex: 1;
  min-width: 0;
  overflow: hidden;
`;

const TreeHead = styled.div`
  display: flex;
  height: 23px;
  background: #e7e7e7;
`;

const HeadCell = styled.div<{ $w: number }>`
  display: flex;
  align-items: center;
  justify-content: center;
  width: ${(p) => p.$w}px;
  border: 1px solid;
  border-color: #f4f4f4 #333 #333 #f4f4f4;
  background: linear-gradient(#f4f4f4, #b6b6b6);
`;

const EyeHead = styled(HeadCell)`
  padding-right: 3px;
`;

const TreeRow = styled.li<{ $short?: boolean }>`
  display: flex;
  align-items: center;
  height: ${(p) => (p.$short ? 15 : 17)}px;
`;

const EyeCell = styled.span`
  display: flex;
  justify-content: center;
  width: 28px;
  padding-right: 6px;
`;

const Guide = styled.span<{ $v?: 'full' | 'top' | 'none'; $h?: boolean }>`
  position: relative;
  display: flex;
  align-items: center;
  align-self: stretch;
  width: 20px;
  padding-left: 6px;
  &::before {
    content: '';
    position: absolute;
    left: 10px;
    top: 0;
    height: ${(p) => (p.$v === 'top' ? '50%' : '100%')};
    border-left: ${(p) => (p.$v === 'none' ? 0 : 1)}px dotted #777;
  }
  &::after {
    content: '';
    position: absolute;
    left: 10px;
    right: 0;
    top: 50%;
    border-top: ${(p) => (p.$h ? 1 : 0)}px dotted #777;
  }
`;

const Expander = styled.button`
  position: relative;
  z-index: 1;
  width: 9px;
  height: 9px;
  padding: 0;
  border: 1px solid #555;
  background:
    linear-gradient(#000, #000) center / 5px 1px no-repeat,
    linear-gradient(#000, #000) center / 1px 5px no-repeat,
    #fff;
  &[aria-expanded='true'] {
    background: linear-gradient(#000, #000) center / 5px 1px no-repeat, #fff;
  }
`;

const TreeIcon = styled.span`
  display: flex;
  justify-content: center;
  width: 20px;
`;

const TreeLabel = styled.span`
  padding-left: 3px;
  line-height: 15px;
  white-space: nowrap;
`;

type Item = { name: string; icon: string; eye?: 'eye' | 'eyeOff'; leaf?: boolean; mesh?: boolean };

const geometry: Item[] = [
  { name: 'Quadrangle Face_2', icon: 'treeFace', eye: 'eyeOff' },
  { name: 'Quadrangle Face_3', icon: 'treeFace', eye: 'eyeOff' },
  { name: 'O', icon: 'treePoint', eye: 'eyeOff', leaf: true },
  { name: 'OX', icon: 'treeLine', eye: 'eyeOff', leaf: true },
  { name: 'OY', icon: 'treeLine', eye: 'eyeOff', leaf: true },
  { name: 'OZ', icon: 'treeLine', eye: 'eyeOff', leaf: true },
  { name: '1a', icon: 'treeLine', eye: 'eyeOff' },
  ...['1b', '1c', '1d', '1e', '2', '3a', '3b', '3c', '3d'].map((name): Item => ({ name, icon: 'treeLine', eye: 'eye' })),
  { name: '3e', icon: 'treeLine', eye: 'eyeOff' },
];

const meshes: Item[] = [
  { name: 'Hypotheses', icon: 'sigmaRed', mesh: true },
  { name: 'Algorithms', icon: 'sigmaBlue', mesh: true },
  { name: 'Mesh_1', icon: 'mesh', mesh: true },
];

const Leaf = ({ item, last }: { item: Item; last?: boolean }) => (
  <TreeRow $short={item.mesh}>
    <EyeCell>{item.eye && <Icon name={item.eye} size={14} />}</EyeCell>
    <Guide $v={item.mesh ? 'none' : 'full'} />
    <Guide $v={last ? 'top' : 'full'} $h>
      {!item.leaf && <Expander aria-label={`Expand ${item.name}`} aria-expanded={false} />}
    </Guide>
    <TreeIcon><Icon name={item.icon} size={12} /></TreeIcon>
    <TreeLabel>{item.name}</TreeLabel>
  </TreeRow>
);

const Scroll = styled.div`
  display: flex;
  flex-direction: column;
  flex: none;
  width: 17px;
  background: repeating-conic-gradient(#dedede 0 25%, #fff 0 50%) 0 0 / 2px 2px;
`;

const ScrollButton = styled(DockButton)`
  flex: none;
  width: 16px;
  height: 16px;
  background: linear-gradient(#f0f0f0, #c0c0c0);
`;

const Space = styled.span<{ $grow: number }>`
  flex: ${(p) => p.$grow} 1 0;
`;

const Thumb = styled.span`
  display: flex;
  align-items: center;
  justify-content: center;
  flex: 162 1 0;
  width: 16px;
  border: 1px solid #aaa;
  background: linear-gradient(90deg, #c4c4c4, #fff 60%, #d4d4d4);
  &::before {
    content: '';
    width: 12px;
    height: 12px;
    background: linear-gradient(90deg, #fff 1px, transparent 1px) 0 0 / 3px 3px,
      linear-gradient(#fff 1px, #888 1px) 0 0 / 3px 3px;
  }
`;

const Splitter = styled.div<{ $vertical?: boolean }>`
  display: flex;
  align-items: center;
  justify-content: center;
  &::before {
    content: '';
    width: ${(p) => (p.$vertical ? 2 : 14)}px;
    height: ${(p) => (p.$vertical ? 14 : 2)}px;
    background: ${(p) => (p.$vertical
      ? 'linear-gradient(#888 2px, transparent 2px) 0 0 / 2px 3px'
      : 'linear-gradient(90deg, #888 2px, transparent 2px) 0 0 / 3px 2px')};
  }
  ${(p) => p.$vertical && css`
    flex: none;
    width: 9px;
    border-left: 1px solid #fff;
  `}
`;

/* ---------- group boxes and form parts ---------- */

const Group = styled.fieldset<{ $tight?: boolean }>`
  min-width: 0;
  margin: 0;
  padding: ${(p) => (p.$tight ? '6px' : '10px')};
  border: 1px solid;
  border-color: #fff #000 #000 #fff;
`;

const Legend = styled.legend<{ $flush?: boolean }>`
  position: relative;
  z-index: 0;
  height: 15px;
  margin-left: ${(p) => (p.$flush ? 0 : -3)}px;
  padding: 0 2px;
  border: 1px solid #777;
  border-right: 0;
  border-radius: 5px 0 0 5px;
  background: linear-gradient(#c4c4c4, #ececec 60%, #c8c8c8);
  line-height: 12px;
  &::after {
    content: '';
    position: absolute;
    z-index: -1;
    right: -5px;
    top: 1px;
    width: 11px;
    height: 11px;
    border: 1px solid #777;
    border-width: 1px 1px 0 0;
    background: linear-gradient(135deg, #ccc, #eaeaea 60%, #ccc);
    transform: rotate(45deg);
  }
`;

const TextInput = styled.input`
  flex: 1;
  min-width: 0;
  height: 20px;
  padding: 0 4px;
  border: 1px solid;
  border-color: #999 #333 #333 #999;
  border-radius: 0;
  outline: 0;
  background: linear-gradient(90deg, rgba(190, 190, 190, 0.6), transparent 8px), linear-gradient(#d0d0d0, #fff 6px);
  &:disabled {
    background: linear-gradient(#c8c8c8, #e4e4e4 8px);
    color: #828282;
  }
`;

const Info = styled.div`
  display: flex;
  flex-direction: column;
  flex: 1;
  gap: 6px;
  min-height: 0;
  padding: 11px 8px 0;
`;

const Line = styled.div`
  display: flex;
  align-items: center;
  gap: 6px;
`;

const IconSlot = styled.span`
  display: flex;
  justify-content: center;
  width: 19px;
`;

const TableFrame = styled.div`
  flex: 1;
  min-height: 0;
  margin-right: 1px;
  border: 1px solid;
  border-top-width: 2px;
  border-color: #333 #fff #fff #333;
  background: #fff;
`;

const Table = styled.table`
  width: 100%;
  border-collapse: separate;
  border-spacing: 0;
  table-layout: fixed;
  th {
    height: 22px;
    padding: 0 3px;
    border: 1px solid;
    border-color: #f4f4f4 #333 #333 #f4f4f4;
    background: linear-gradient(#f4f4f4, #b6b6b6);
    font-weight: 400;
    text-align: left;
  }
  th:first-child { width: 69px; }
  td {
    height: 14px;
    padding: 0 3px;
    line-height: 14px;
  }
`;

const NameCell = styled.span`
  display: flex;
  align-items: center;
  height: 14px;
`;

const Branch = styled(Guide)`
  padding: 0;
  width: 20px;
  &::before { left: 7px; }
  &::after { left: 7px; right: 4px; }
`;

/* ---------- viewer ---------- */

const Viewer = styled.section`
  display: flex;
  flex-direction: column;
  flex: 1;
  min-width: 0;
  border-top: 2px solid #777;
  border-left: 3px solid #555;
`;

const Tabs = styled.div`
  display: grid;
  grid-template-columns: 1fr 1fr;
  flex: none;
  height: 23px;
  padding: 2px 36px 2px 1px;
`;

const Tab = styled.button<{ $active?: boolean }>`
  position: relative;
  padding: 0;
  border: 1px solid #fff;
  line-height: 16px;
  ${(p) => (p.$active
    ? css`
      border-width: 1px 0 0 1px;
      background: #e7e7e7;
      color: #00007c;
      padding-right: 16px;
    `
    : css`
      background: linear-gradient(#e2e2e2, #bebebe 50%, #d8d8d8);
      clip-path: polygon(0 0, calc(100% - 10px) 0, 100% 10px, 100% 100%, 0 100%);
    `)}
`;

const TabEdge = styled.svg`
  position: absolute;
  right: -36px;
  top: -1px;
  background: #e7e7e7;
`;

const Scene = styled.div`
  position: relative;
  flex: 1;
  min-height: 0;
  overflow: hidden;
  background: linear-gradient(#ccdaff, #6a8eff);
`;

const Drawing = styled.svg`
  position: absolute;
  inset: 0;
  width: 100%;
  height: 100%;
`;

const Triad = styled.svg`
  position: absolute;
  left: 20px;
  bottom: 12px;
`;

const vertices = [
  [552, 56], [668, 56], [900, 56], [1016, 56],
  [668, 172], [900, 172], [668, 404], [900, 404],
  [668, 520], [900, 520], [1016, 520],
];

const Vertex = ({ x, y, c = '#ff7a00' }: { x: number; y: number; c?: string }) => (
  <g {...wire(c, 1)}>
    <circle cx={x} cy={y} r="4" strokeWidth="1.3" />
    <path d={`M${x - 6} ${y}h12M${x} ${y - 6}v12`} />
  </g>
);

const SceneDrawing = () => (
  <Drawing aria-hidden="true">
    <g transform="translate(0.5 0.5)">
      <path d="M784 0v288" {...wire('#00f000', 1)} />
      <line x1="784" y1="288" x2="100%" y2="288" stroke="#f0101c" />
      <path d="M552 56v464" {...wire('#ee82ee', 1)} />
      <path d="M668 56v116h232V56h116v464H900V404H668v116" {...wire('#f00', 1)} />
      {vertices.map(([x, y]) => <Vertex key={`${x}-${y}`} x={x} y={y} />)}
      <Vertex x={552} y={520} c="#fff" />
      <g {...wire('#c9ccb0', 1)}>
        <circle cx="784" cy="288" r="8" strokeDasharray="2 1" />
        <path d="M776 288h16M784 280v16M778 282l12 12M790 282l-12 12" strokeDasharray="2 1" />
      </g>
      <path d="M785 280h7l-7 8h7" {...wire('#ff0', 1.6)} />
    </g>
  </Drawing>
);

const DialogFrame = styled.section`
  position: absolute;
  left: 10px;
  top: 6px;
  width: 394px;
  border: 1px solid #c9c5c1;
  border-width: 0 1px 3px;
  border-radius: 6px 6px 4px 4px;
  background: #e7e7e7;
  box-shadow: 0 0 2px 1px #5a5f70, 0 2px 8px 2px rgba(20, 30, 90, 0.65);
`;

const DialogTitle = styled.header`
  display: flex;
  align-items: center;
  gap: 8px;
  height: 24px;
  padding: 0 6px 0 5px;
  border-radius: 6px 6px 0 0;
  background: #d6d2ce;
  color: #7a7876;
`;

const DialogName = styled.h2`
  flex: 1;
  margin: 0;
  padding-left: 45px;
  text-align: center;
  font-size: 11px;
  line-height: 16px;
  font-weight: 400;
  text-shadow: 0 1px 1px #fff;
`;

const DialogBody = styled.form`
  display: flex;
  flex-direction: column;
  gap: 6px;
  padding: 9px 10px 10px;
`;

const Choices = styled.div`
  display: grid;
  grid-template-columns: 1fr 1fr;
  gap: 6px;
`;

const Choice = styled.label`
  display: flex;
  align-items: center;
  gap: 6px;
  height: 20px;
`;

const Radio = styled.input`
  appearance: none;
  width: 12px;
  height: 12px;
  margin: 0;
  border: 1px solid #333;
  border-radius: 50%;
  background: #fff;
  &:checked { background: radial-gradient(circle, #000 2px, #fff 3px); }
`;

const PointRow = styled.div`
  display: grid;
  grid-template-columns: 38px 32px 1fr;
  align-items: center;
  gap: 6px;
  & + & { margin-top: 6px; }
`;

const FieldLabel = styled.label`
  white-space: nowrap;
`;

const NameRow = styled(Line)`
  ${FieldLabel} { width: 34px; }
`;

const Button = styled.button<{ $down?: boolean }>`
  display: flex;
  align-items: center;
  justify-content: center;
  height: 26px;
  padding: 0;
  border: 1px solid;
  border-color: #aaa #333 #333 #aaa;
  background: linear-gradient(#fafafa, #dcdcdc 50%, #b6b6b6);
  white-space: nowrap;
`;

const PickButton = styled(Button)`
  height: 28px;
  ${(p) => p.$down && css`
    border-color: #333 #aaa #aaa #333;
    background: linear-gradient(#c8c8c8, #fbfbfb);
  `}
`;

const Actions = styled.div`
  display: grid;
  grid-template-columns: 101px 1fr 1fr 1fr;
  gap: 6px;
`;

const Glyph = ({ d }: { d: string }) => (
  <svg width="9" height="9" viewBox="0 0 9 9" aria-hidden="true"><path d={d} {...wire('#6c6a68', 1.2)} /></svg>
);

const Dialog = () => (
  <DialogFrame aria-label="Line Construction">
    <DialogTitle>
      <Icon name="lamp" size={16} />
      <RoundButton aria-label="Window menu"><Glyph d="M4 5h1" /></RoundButton>
      <DialogName>Line Construction</DialogName>
      <RoundButton aria-label="Help">?</RoundButton>
      <RoundButton aria-label="Minimize"><Glyph d="M1 3l3.500 3L8 3" /></RoundButton>
      <RoundButton aria-label="Maximize"><Glyph d="M1 6l3.500-3L8 6" /></RoundButton>
      <RoundButton aria-label="Close"><Glyph d="M1 1l7 7M8 1L1 8" /></RoundButton>
    </DialogTitle>
    <DialogBody onSubmit={(e) => e.preventDefault()}>
      <Group>
        <Legend>Line</Legend>
        <Choices>
          <Choice><Radio type="radio" name="mode" defaultChecked aria-label="Two points" /><Icon name="segment" size={18} shadow /></Choice>
          <Choice><Radio type="radio" name="mode" aria-label="Two planes" /><Icon name="planes" size={18} shadow /></Choice>
        </Choices>
      </Group>
      <Group>
        <Legend>Result name</Legend>
        <NameRow>
          <FieldLabel htmlFor="name">Name</FieldLabel>
          <TextInput id="name" defaultValue="4" />
        </NameRow>
      </Group>
      <Group>
        <Legend>Points</Legend>
        <PointRow>
          <FieldLabel htmlFor="p1">Point 1</FieldLabel>
          <PickButton type="button" aria-label="Pick point 1"><Icon name="bent" size={18} shadow /></PickButton>
          <TextInput id="p1" defaultValue="Vertex_4" disabled />
        </PointRow>
        <PointRow>
          <FieldLabel htmlFor="p2">Point 2</FieldLabel>
          <PickButton type="button" $down aria-label="Pick point 2"><Icon name="bent" size={18} shadow /></PickButton>
          <TextInput id="p2" defaultValue="Vertex_1" />
        </PointRow>
      </Group>
      <Group>
        <Actions>
          <Button type="button"><span>A<u>p</u>ply and Close</span></Button>
          <Button type="button"><span><u>A</u>pply</span></Button>
          <Button type="button"><span><u>C</u>lose</span></Button>
          <Button type="button"><span><u>H</u>elp</span></Button>
        </Actions>
      </Group>
    </DialogBody>
    <Callout n={2} box={{ x: 11, y: 105, w: 95, h: 44 }} at={[114, 92]} />
    <Callout n={6} box={{ x: 10, y: 263, w: 112, h: 40 }} at={[8, 234]} />
    <Callout n={5} box={{ x: 122, y: 260, w: 91, h: 46 }} at={[220, 247]} />
  </DialogFrame>
);

const menu: [string, boolean][] = [
  ['File', true], ['Edit', true], ['View', true], ['New Entity', false], ['Operations', false],
  ['Repair', false], ['Measures', false], ['Tools', true], ['Window', true], ['Help', true],
];

export default function App() {
  return (
    <Shell>
      <Global />
      <Gradients />
      <TitleBar>
        <Icon name="lamp" size={16} />
        <RoundButton aria-label="Window menu"><Glyph d="M4 5h1" /></RoundButton>
        <TitleText>SALOME 7.3.0 - [Study1]</TitleText>
      </TitleBar>
      <MenuBar>
        {menu.map(([label, key]) => (
          <MenuItem key={label}>
            {key ? <><u>{label[0]}</u>{label.slice(1)}</> : label}
            {label === 'New Entity' && <Callout n={1} box={{ x: -9, y: -9, w: 74, h: 33 }} at={[69, -22]} />}
          </MenuItem>
        ))}
      </MenuBar>

      <Bar>
        <Grip $kind="lead" />
        <Tools names="new open save delete | copy paste ::" />
        <Combo>
          <Icon name="binoculars" size={13} />
          <ComboSelect aria-label="Module" defaultValue="Geometry"><option>Geometry</option></ComboSelect>
          <ComboArrow><Arrow /></ComboArrow>
        </Combo>
        <ToolButton $pressed aria-label="Geometry"><Icon name="binoculars" size={18} shadow /></ToolButton>
        <Tools names="shaper stripes calc yacs globe lobster greencube brick1 brick2 pages python graph gearGraph gearRgb" />
      </Bar>
      <Bar>
        <Grip $kind="lead" />
        <Tools names="point segment circle ellipse arc curve vector sketch sketch3d isoline plane lcs originAxes :: box cylinder sphere torus cone face disk pipeT :: fuse common cut section :: meshDisk meshCyl :: image more :: teal" />
      </Bar>
      <Bar>
        <Grip $kind="lead" />
        <Tools names="translate rotate location mirror scale offset projection | multiTranslate multiRotate :: partition archimede groupOn blockExplode sharedShape :: extrusion revolution filling pipe pipe :: edgeLine wire face shell box compound :: fillet1d fillet2d fillet3d chamfer featureCube featureHole" />
        <Grip $end />
        <Tools names="xaoOut xaoIn" />
      </Bar>

      <Workspace>
        <Docks>
          <Dock>
            <DockHeader title="Object Browser" />
            <TreeFrame>
              <TreeMain>
                <TreeHead>
                  <EyeHead $w={28}><Icon name="eye" size={14} /></EyeHead>
                  <HeadCell $w={181}>Name</HeadCell>
                </TreeHead>
                <ul>
                  {geometry.map((g, i) => <Leaf key={g.name} item={g} last={i === geometry.length - 1} />)}
                  <TreeRow>
                    <EyeCell />
                    <Guide $v="top" $h><Expander aria-label="Collapse Mesh" aria-expanded /></Guide>
                    <TreeIcon><Icon name="mesh" size={15} shadow /></TreeIcon>
                    <TreeLabel>Mesh</TreeLabel>
                  </TreeRow>
                  {meshes.map((m) => <Leaf key={m.name} item={m} />)}
                </ul>
              </TreeMain>
              <Scroll>
                <ScrollButton aria-label="Scroll up"><Arrow up size={11} /></ScrollButton>
                <Space $grow={146} />
                <Thumb />
                <Space $grow={25} />
                <ScrollButton aria-label="Scroll down"><Arrow size={11} /></ScrollButton>
              </Scroll>
            </TreeFrame>
          </Dock>
          <Splitter />
          <Dock>
            <DockHeader title="Information" line />
            <Info>
              <Group $tight>
                <Legend $flush>Creation operation</Legend>
                <Line>
                  <IconSlot><Icon name="point" size={18} shadow /></IconSlot>
                  <TextInput aria-label="Creation operation" defaultValue="Point" />
                </Line>
              </Group>
              <TableFrame>
                <Table>
                  <thead><tr><th>Parameter</th><th>Value</th></tr></thead>
                  <tbody>
                    {[['X', '-1'], ['Y', '-1'], ['Z', '0']].map(([p, v]) => (
                      <tr key={p}>
                        <td><NameCell><Branch $v={p === 'Z' ? 'top' : 'full'} $h />{p}</NameCell></td>
                        <td>{v}</td>
                      </tr>
                    ))}
                  </tbody>
                </Table>
              </TableFrame>
            </Info>
          </Dock>
        </Docks>
        <Splitter $vertical />
        <Viewer>
          <Tabs>
            <Tab>VTK scene:1 - viewer:1</Tab>
            <Tab $active>
              OCC scene:1 - viewer:1
              <TabEdge width="56" height="20" viewBox="0 0 56 20" aria-hidden="true">
                <path d="M0 0l20 19h36" {...wire('#fff', 1)} />
              </TabEdge>
            </Tab>
          </Tabs>
          <Bar>
            <Grip $kind="view" />
            <Tools
              names="camera mouse trihedronZoom select preselect triad fitAll fitArea zoom pan globalPan rotationPoint rotateView front back top bottom left right anticlock clock resetView storeView restoreView | cloneWindow | clipping graduated ambient light minimize syncViews down"
              pressed={['select', 'preselect']}
            />
          </Bar>
          <Scene>
            <SceneDrawing />
            <Triad width="48" height="48" viewBox="0 0 48 48" aria-hidden="true">
              <path d="M9 38V16" stroke="#00d000" strokeWidth="2" />
              <path d="M9 12l3 6H6z" fill="#0a8a0a" />
              <path d="M9 38h18" stroke="#e00000" strokeWidth="2" />
              <path d="M32 38l-6-2v4z" fill="#a00000" />
              <path d="M7 36h4v4H7z" fill="#000060" />
              <g fontFamily="Liberation Mono" fontSize="13" fill="#eef2ff">
                <text x="9" y="13">Y</text>
                <text x="32" y="40">X</text>
                <text x="7" y="38">Z</text>
              </g>
            </Triad>
            <Callout n={3} box={{ x: 517, y: 29, w: 60, h: 51 }} at={[585, 12]} />
            <Callout n={4} box={{ x: 529, y: 495, w: 45, h: 50 }} at={[577, 476]} />
            <Dialog />
          </Scene>
        </Viewer>
      </Workspace>
    </Shell>
  );
}
